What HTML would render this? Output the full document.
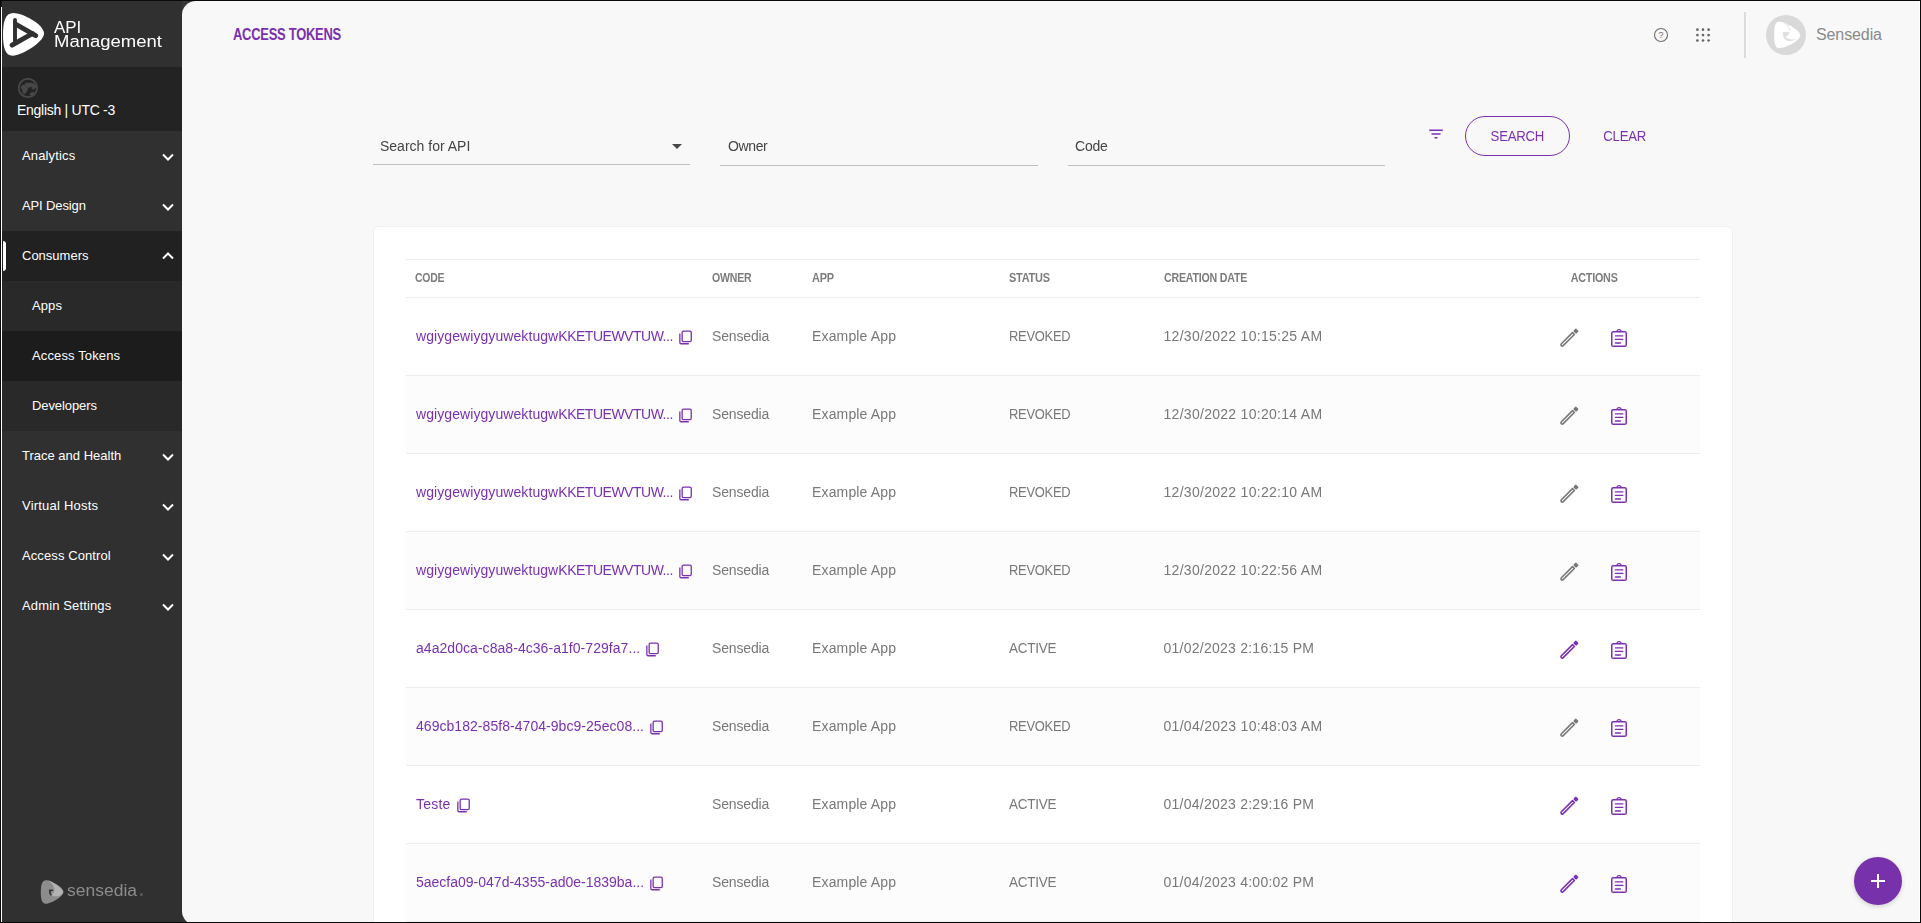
<!DOCTYPE html>
<html lang="en">
<head>
<meta charset="utf-8">
<title>Access Tokens - API Management</title>
<style>
*{box-sizing:border-box;margin:0;padding:0}
html,body{width:1921px;height:923px;overflow:hidden;background:#0a0a0a}
body{position:relative;font-family:"Liberation Sans",Arial,sans-serif;font-size:14px;color:#444;-webkit-font-smoothing:antialiased}
ul{list-style:none}
button{font:inherit;background:none;border:0;cursor:pointer}
svg{display:block}
.app{position:absolute;left:1px;top:1px;width:1919px;height:921px;background:#363636;overflow:hidden}
.edge{position:absolute;left:0;top:0;width:1px;height:921px;background:#fff;z-index:5}
.edge:before{content:"";position:absolute;left:0;top:0;width:1px;height:6px;background:#2d0a38}
/* ---------- sidebar ---------- */
.sidebar{position:absolute;left:1px;top:0;width:180px;height:921px;background:#303030;color:#fff}
.brand{position:relative;height:66px;background:#303030}
.brand svg{position:absolute;left:0;top:0}
.brand .t{position:absolute;left:52px;white-space:nowrap;color:#fff;line-height:16px;will-change:transform}
.brand .t1{top:19px}
.brand .t2{top:33px}
.lang{position:relative;height:64px;background:#232323}
.lang svg{position:absolute;left:16px;top:11px}
.lang span{position:absolute;left:15px;top:33px;line-height:20px;white-space:nowrap;color:#fff}
.nav li{position:relative}
.nav a{display:block;height:50px;line-height:50px;padding-left:20px;color:#fff;text-decoration:none;font-size:13px;white-space:nowrap;position:relative}
.nav a svg{position:absolute;left:160px;top:14px}
.nav .open>a{background:#212121}
.nav .open>a:before{content:"";position:absolute;left:1px;top:10px;width:3px;height:30px;background:#fff;border-radius:0 3px 3px 0}
.nav .sub a{padding-left:30px;background:#292929}
.nav .sub a.cur{background:#1c1c1c}
.foot{position:absolute;left:0;bottom:0;width:180px;height:60px}
.foot svg{position:absolute;left:38px;top:17px}
.foot span{position:absolute;left:65px;top:19px;line-height:20px;color:#8c8c8c;white-space:nowrap;will-change:transform}
.foot i{position:absolute;left:138px;top:31px;width:3px;height:3px;border-radius:50%;background:#5a5a5a}
/* ---------- main ---------- */
.main{position:absolute;left:181px;top:0;width:1738px;height:924px;background:#f8f8f8;border-radius:14px 0 0 14px;overflow:hidden}
.top{position:relative;height:68px}
.top h1{position:absolute;left:51px;top:24px;line-height:20px;font-weight:700;color:#7a30b0;white-space:nowrap}
.top .help{position:absolute;left:1471px;top:26px}
.top .grid{position:absolute;left:1512px;top:25px}
.top .sep{position:absolute;left:1562px;top:11px;width:2px;height:46px;background:#dcdcdc}
.top .avatar{position:absolute;left:1584px;top:14px;width:40px;height:40px;border-radius:50%;background:#d9d9d9}
.top .user{position:absolute;left:1634px;top:24px;line-height:20px;color:#8a8a8a;white-space:nowrap}
.filters{will-change:transform;position:absolute;left:0;top:115px;width:1738px;height:50px}
.field{position:absolute;top:0;height:49px;border-bottom:1px solid #bfbfbf}
.field label{position:absolute;left:7px;top:20px;line-height:20px;color:#444;white-space:nowrap}
.field .caret{position:absolute;right:8px;top:28px;width:0;height:0;border-left:5px solid transparent;border-right:5px solid transparent;border-top:5px solid #484848}
.filt{position:absolute;left:1245px;top:9px}
.btn{position:absolute;top:0;height:40px;line-height:38px;text-align:center;color:#7a30b0;white-space:nowrap}
.btn.out{left:1283px;width:105px;border:1px solid #7a30b0;border-radius:20px}
.btn.txt{left:1405px;width:76px;line-height:40px}
/* ---------- card/table ---------- */
.card{will-change:transform;position:absolute;left:191px;top:225px;width:1360px;height:760px;background:#fff;border:1px solid #efefef;border-radius:6px}
table{position:absolute;left:32px;top:32px;width:1294px;border-collapse:separate;border-spacing:0;table-layout:fixed}
th,td{padding:0 0 2px 9px;text-align:left;vertical-align:middle;white-space:nowrap;overflow:hidden;border-bottom:1px solid #ededed}
th{height:39px;border-top:1px solid #ededed;color:#7c7c7c;font-weight:700;font-size:12px}
td{height:78px;color:#787878;font-size:14px}
tbody tr:nth-child(even) td{background:#fcfcfc}
th.c,td.c{text-align:center;padding:0 0 2px 0}
th:nth-child(4),td:nth-child(4),th:nth-child(5),td:nth-child(5){padding-left:9.5px}
td.code{padding-left:10px}
td.code{color:#7a30b0}
td.code span,td.code svg{display:inline-block;vertical-align:middle}
td.code svg{margin-left:6px;position:relative;top:1.8px}
.acts{position:relative;height:24px;width:211px}
.acts svg{position:absolute;top:2px}
.acts .pen{left:68px;top:2.5px}
.acts .clip{left:121px;top:4px}
.main:after{content:"";position:absolute;right:0;top:0;width:1px;height:921px;background:#fff}
.fab{position:absolute;left:1672px;top:856px;width:48px;height:48px;border-radius:50%;background:#7732ab;box-shadow:0 2px 4px rgba(0,0,0,.10),0 1px 6px rgba(0,0,0,.06)}
.fab:before,.fab:after{content:"";position:absolute;background:#fff}
.fab:before{left:17px;top:23px;width:14px;height:2px}
.fab:after{left:23px;top:17px;width:2px;height:14px}
</style>
</head>
<body>
<div class="app">
<div class="edge"></div>
<aside class="sidebar">
<div class="brand"><svg width="50" height="66" viewBox="0 0 50 66"><path d="M11.5 12C20 12 42 23 42 32.6C42 41 20 54.7 10.5 54.7C3 54.7 1 46 1 34C1 21 3 12 11.5 12Z" fill="#fff"/><g fill="none" stroke="#303030" stroke-linecap="round"><path d="M13 18.9V42.4" stroke-width="3.9"/><path d="M14 23.4L33.7 34.6" stroke-width="4.9"/><path d="M10.1 44.1L30.3 32.6" stroke-width="4.9"/></g></svg><span class="t t1" style="font-size:16px;display:inline-block;transform:scaleX(1.0583);transform-origin:left center;">API</span><span class="t t2" style="font-size:16px;display:inline-block;transform:scaleX(1.1564);transform-origin:left center;">Management</span></div>
<div class="lang"><svg width="21" height="21" viewBox="0 0 21 21"><circle cx="9.9" cy="10" r="9.2" fill="none" stroke="#484848" stroke-width="1.8"/><g fill="#484848" stroke="#484848" stroke-width="0.7" stroke-linejoin="round"><path d="M3 8.7L4.500 7.200L7.100 7L9 8.700L9.800 10.900L8.700 13.200L7.100 15.500L5.600 16.200L4.900 14L4.500 11.700L3.200 10.200Z"/><path d="M7.200 5.300L9.800 5.100L13.200 5.100L16.200 6L18 7.900L17.400 9.800L15.500 11.300L14 10.600L14.700 9L12.400 8.700L10.900 9.800L9.400 8.700L7.900 7.200Z"/><path d="M12.100 15.500L13.600 14.400L15.500 14.200L16.200 15.500L15.500 17L13.600 17.700L12.300 17Z"/></g></svg><span style="font-size:14px;letter-spacing:-0.277px;">English | UTC -3</span></div>
<nav class="nav"><ul>
<li><a><span style="font-size:13px;letter-spacing:0.146px;">Analytics</span><svg width="12" height="8" viewBox="0 0 12 8" style="top:22px"><polyline points="1,1.5 6,6.5 11,1.5" fill="none" stroke="#fff" stroke-width="2"/></svg></a></li>
<li><a><span style="font-size:13px;letter-spacing:-0.127px;">API Design</span><svg width="12" height="8" viewBox="0 0 12 8" style="top:22px"><polyline points="1,1.5 6,6.5 11,1.5" fill="none" stroke="#fff" stroke-width="2"/></svg></a></li>
<li class="open"><a><span style="font-size:13px;">Consumers</span><svg width="12" height="8" viewBox="0 0 12 8" style="top:21px"><polyline points="1,6.5 6,1.5 11,6.5" fill="none" stroke="#fff" stroke-width="2"/></svg></a>
<ul class="sub">
<li><a><span style="font-size:13px;letter-spacing:0.086px;">Apps</span></a></li>
<li><a class="cur"><span style="font-size:13px;letter-spacing:0.136px;">Access Tokens</span></a></li>
<li><a><span style="font-size:13px;letter-spacing:-0.085px;">Developers</span></a></li>
</ul></li>
<li><a><span style="font-size:13px;">Trace and Health</span><svg width="12" height="8" viewBox="0 0 12 8" style="top:22px"><polyline points="1,1.5 6,6.5 11,1.5" fill="none" stroke="#fff" stroke-width="2"/></svg></a></li>
<li><a><span style="font-size:13px;letter-spacing:0.211px;">Virtual Hosts</span><svg width="12" height="8" viewBox="0 0 12 8" style="top:22px"><polyline points="1,1.5 6,6.5 11,1.5" fill="none" stroke="#fff" stroke-width="2"/></svg></a></li>
<li><a><span style="font-size:13px;letter-spacing:0.098px;">Access Control</span><svg width="12" height="8" viewBox="0 0 12 8" style="top:22px"><polyline points="1,1.5 6,6.5 11,1.5" fill="none" stroke="#fff" stroke-width="2"/></svg></a></li>
<li><a><span style="font-size:13px;letter-spacing:0.136px;">Admin Settings</span><svg width="12" height="8" viewBox="0 0 12 8" style="top:22px"><polyline points="1,1.5 6,6.5 11,1.5" fill="none" stroke="#fff" stroke-width="2"/></svg></a></li>
</ul></nav>
<div class="foot"><svg width="24" height="26" viewBox="0 0 24 26"><path d="M6 1.200C11 1.200 23.400 8 23.400 13C23.400 17.500 11 24.800 5.600 24.800C1.800 24.800 .8 20 .8 13.600C.8 6.400 1.800 1.200 6 1.200Z" fill="#8c8c8c"/><path d="M7.900 1.150C10.500 3 14.500 7 14.400 10.600C14.300 13 13 15 11.600 15.400L11 16.400C14 17.600 18 17.500 20 16.800C21.500 15.600 23.300 14 23.300 12.700C22 9.500 13 2.500 7.900 1.150Z" fill="#b2b2b2"/><path d="M9.150 10.500L13.300 10.760L13 12L11 12.100L10.600 14.300L12.300 16.200L10.300 16.600L9.100 14Z" fill="#303030"/></svg><span style="font-size:16px;display:inline-block;transform:scaleX(1.0929);transform-origin:left center;">sensedia</span><i></i></div>
</aside>
<main class="main">
<header class="top"><h1 style="font-size:16px;letter-spacing:-0.320px;display:inline-block;transform:scaleX(0.8094);transform-origin:left center;">ACCESS TOKENS</h1><svg class="help" width="16" height="16" viewBox="0 0 16 16"><circle cx="8" cy="8" r="6.5" fill="none" stroke="#6e6e6e" stroke-width="1.1"/><text x="8" y="11.400" text-anchor="middle" font-family="Liberation Sans, sans-serif" font-size="9.500" fill="#6e6e6e">?</text></svg><svg class="grid" width="18" height="18" viewBox="0 0 18 18" fill="#666"><circle cx="3.4" cy="3.7" r="1.35"/><circle cx="3.4" cy="9.1" r="1.35"/><circle cx="3.4" cy="14.5" r="1.35"/><circle cx="9.0" cy="3.7" r="1.35"/><circle cx="9.0" cy="9.1" r="1.35"/><circle cx="9.0" cy="14.5" r="1.35"/><circle cx="14.6" cy="3.7" r="1.35"/><circle cx="14.6" cy="9.1" r="1.35"/><circle cx="14.6" cy="14.5" r="1.35"/></svg><span class="sep"></span><span class="avatar"><svg width="40" height="40" viewBox="0 0 40 40"><path d="M12.800 6.700C19 6.700 34.200 15 34.200 20.500C34.200 25.500 19.500 33.200 13.200 33.200C9 33.200 8.200 27.500 8.200 20.500C8.200 12.500 8.800 6.700 12.800 6.700Z" fill="#fff"/><path d="M18.400 8.200C21.500 9.500 24.200 13 23.600 16.500" fill="none" stroke="#e9e9e9" stroke-width="1.3"/><path d="M17 17L23.600 17.300C23 19.500 21.500 21 19.500 21.800C21 24 25 25.200 30.300 24.300C26 26.600 21 26.400 18.600 24C17.300 22.400 16.900 20 17 17Z" fill="#dedede"/></svg></span><span class="user" style="font-size:16px;letter-spacing:-0.103px;">Sensedia</span></header>
<section class="filters"><div class="field" style="left:191px;width:317px"><label style="font-size:14px;">Search for API</label><span class="caret"></span></div><div class="field" style="left:538px;width:318px;height:50px"><label style="font-size:14px;letter-spacing:-0.384px;left:8px;">Owner</label></div><div class="field" style="left:886px;width:317px;height:50px"><label style="font-size:14px;letter-spacing:-0.223px;">Code</label></div><svg class="filt" width="18" height="18" viewBox="0 0 24 24" fill="#7a30b0"><path d="M10 18h4v-2h-4v2zM3 6v2h18V6H3zm3 7h12v-2H6v2z"/></svg><button class="btn out"><span style="font-size:14px;letter-spacing:-0.280px;display:inline-block;transform:scaleX(0.9428);transform-origin:center center;">SEARCH</span></button><button class="btn txt"><span style="font-size:14px;letter-spacing:-0.280px;display:inline-block;transform:scaleX(0.9393);transform-origin:center center;">CLEAR</span></button></section>
<section class="card"><table><colgroup><col style="width:297px"><col style="width:100px"><col style="width:196px"><col style="width:155px"><col style="width:335px"><col style="width:211px"></colgroup>
<thead><tr><th><span style="font-size:12px;letter-spacing:-0.240px;display:inline-block;transform:scaleX(0.8689);transform-origin:left center;">CODE</span></th><th><span style="font-size:12px;letter-spacing:-0.240px;display:inline-block;transform:scaleX(0.8792);transform-origin:left center;">OWNER</span></th><th><span style="font-size:12px;letter-spacing:-0.240px;display:inline-block;transform:scaleX(0.9088);transform-origin:left center;">APP</span></th><th><span style="font-size:12px;letter-spacing:-0.240px;display:inline-block;transform:scaleX(0.9107);transform-origin:left center;">STATUS</span></th><th><span style="font-size:12px;letter-spacing:-0.240px;display:inline-block;transform:scaleX(0.8871);transform-origin:left center;">CREATION DATE</span></th><th class="c"><span style="font-size:12px;letter-spacing:-0.240px;display:inline-block;transform:scaleX(0.8980);transform-origin:center center;">ACTIONS</span></th></tr></thead><tbody>
<tr><td class="code"><span style="font-size:14px"><span style="letter-spacing:0.077px">wgiygewiygyuwektugw</span><span style="letter-spacing:-0.49px">KKETUEWVTUW...</span></span><svg width="14" height="15" viewBox="0 0 14 15" fill="none" stroke="#7a30b0" stroke-width="1.3"><rect x="3.15" y="1.15" width="9.1" height="10.5" rx="1.4"/><path d="M0.85 3.5V12.45A1.3 1.3 0 0 0 2.15 13.75H9.8"/></svg></td><td><span style="font-size:14px;letter-spacing:-0.156px;">Sensedia</span></td><td><span style="font-size:14px;letter-spacing:0.150px;">Example App</span></td><td><span style="font-size:14px;letter-spacing:-0.280px;display:inline-block;transform:scaleX(0.9238);transform-origin:left center;">REVOKED</span></td><td><span style="font-size:14px;letter-spacing:0.287px;">12/30/2022 10:15:25 AM</span></td><td class="c"><div class="acts"><svg class="pen" width="24" height="24" viewBox="0 0 24 24"><g transform="translate(12 12) rotate(-45) translate(-11.7 0)"><path d="M18 -1.3H2.2A1.3 1.3 0 0 0 2.2 1.3H18Z" fill="none" stroke="#777" stroke-width="1.6" stroke-linejoin="round"/><rect x="19.6" y="-2.1" width="3.8" height="4.2" rx="1" fill="#777"/></g></svg><svg class="clip" width="18" height="20" viewBox="0 0 18 20" fill="none" stroke="#7a30b0"><rect x="1.75" y="3.75" width="14.5" height="14.5" rx="1.6" stroke-width="1.5"/><path d="M7 3.6a2 2 0 0 1 4 0" stroke-width="1.3"/><path d="M5.4 7.9h7.4M5.4 11.4h7.4M5.4 15h5" stroke-width="1.3" stroke-linecap="round"/></svg></div></td></tr>
<tr><td class="code"><span style="font-size:14px"><span style="letter-spacing:0.077px">wgiygewiygyuwektugw</span><span style="letter-spacing:-0.49px">KKETUEWVTUW...</span></span><svg width="14" height="15" viewBox="0 0 14 15" fill="none" stroke="#7a30b0" stroke-width="1.3"><rect x="3.15" y="1.15" width="9.1" height="10.5" rx="1.4"/><path d="M0.85 3.5V12.45A1.3 1.3 0 0 0 2.15 13.75H9.8"/></svg></td><td><span style="font-size:14px;letter-spacing:-0.156px;">Sensedia</span></td><td><span style="font-size:14px;letter-spacing:0.150px;">Example App</span></td><td><span style="font-size:14px;letter-spacing:-0.280px;display:inline-block;transform:scaleX(0.9238);transform-origin:left center;">REVOKED</span></td><td><span style="font-size:14px;letter-spacing:0.287px;">12/30/2022 10:20:14 AM</span></td><td class="c"><div class="acts"><svg class="pen" width="24" height="24" viewBox="0 0 24 24"><g transform="translate(12 12) rotate(-45) translate(-11.7 0)"><path d="M18 -1.3H2.2A1.3 1.3 0 0 0 2.2 1.3H18Z" fill="none" stroke="#777" stroke-width="1.6" stroke-linejoin="round"/><rect x="19.6" y="-2.1" width="3.8" height="4.2" rx="1" fill="#777"/></g></svg><svg class="clip" width="18" height="20" viewBox="0 0 18 20" fill="none" stroke="#7a30b0"><rect x="1.75" y="3.75" width="14.5" height="14.5" rx="1.6" stroke-width="1.5"/><path d="M7 3.6a2 2 0 0 1 4 0" stroke-width="1.3"/><path d="M5.4 7.9h7.4M5.4 11.4h7.4M5.4 15h5" stroke-width="1.3" stroke-linecap="round"/></svg></div></td></tr>
<tr><td class="code"><span style="font-size:14px"><span style="letter-spacing:0.077px">wgiygewiygyuwektugw</span><span style="letter-spacing:-0.49px">KKETUEWVTUW...</span></span><svg width="14" height="15" viewBox="0 0 14 15" fill="none" stroke="#7a30b0" stroke-width="1.3"><rect x="3.15" y="1.15" width="9.1" height="10.5" rx="1.4"/><path d="M0.85 3.5V12.45A1.3 1.3 0 0 0 2.15 13.75H9.8"/></svg></td><td><span style="font-size:14px;letter-spacing:-0.156px;">Sensedia</span></td><td><span style="font-size:14px;letter-spacing:0.150px;">Example App</span></td><td><span style="font-size:14px;letter-spacing:-0.280px;display:inline-block;transform:scaleX(0.9238);transform-origin:left center;">REVOKED</span></td><td><span style="font-size:14px;letter-spacing:0.287px;">12/30/2022 10:22:10 AM</span></td><td class="c"><div class="acts"><svg class="pen" width="24" height="24" viewBox="0 0 24 24"><g transform="translate(12 12) rotate(-45) translate(-11.7 0)"><path d="M18 -1.3H2.2A1.3 1.3 0 0 0 2.2 1.3H18Z" fill="none" stroke="#777" stroke-width="1.6" stroke-linejoin="round"/><rect x="19.6" y="-2.1" width="3.8" height="4.2" rx="1" fill="#777"/></g></svg><svg class="clip" width="18" height="20" viewBox="0 0 18 20" fill="none" stroke="#7a30b0"><rect x="1.75" y="3.75" width="14.5" height="14.5" rx="1.6" stroke-width="1.5"/><path d="M7 3.6a2 2 0 0 1 4 0" stroke-width="1.3"/><path d="M5.4 7.9h7.4M5.4 11.4h7.4M5.4 15h5" stroke-width="1.3" stroke-linecap="round"/></svg></div></td></tr>
<tr><td class="code"><span style="font-size:14px"><span style="letter-spacing:0.077px">wgiygewiygyuwektugw</span><span style="letter-spacing:-0.49px">KKETUEWVTUW...</span></span><svg width="14" height="15" viewBox="0 0 14 15" fill="none" stroke="#7a30b0" stroke-width="1.3"><rect x="3.15" y="1.15" width="9.1" height="10.5" rx="1.4"/><path d="M0.85 3.5V12.45A1.3 1.3 0 0 0 2.15 13.75H9.8"/></svg></td><td><span style="font-size:14px;letter-spacing:-0.156px;">Sensedia</span></td><td><span style="font-size:14px;letter-spacing:0.150px;">Example App</span></td><td><span style="font-size:14px;letter-spacing:-0.280px;display:inline-block;transform:scaleX(0.9238);transform-origin:left center;">REVOKED</span></td><td><span style="font-size:14px;letter-spacing:0.287px;">12/30/2022 10:22:56 AM</span></td><td class="c"><div class="acts"><svg class="pen" width="24" height="24" viewBox="0 0 24 24"><g transform="translate(12 12) rotate(-45) translate(-11.7 0)"><path d="M18 -1.3H2.2A1.3 1.3 0 0 0 2.2 1.3H18Z" fill="none" stroke="#777" stroke-width="1.6" stroke-linejoin="round"/><rect x="19.6" y="-2.1" width="3.8" height="4.2" rx="1" fill="#777"/></g></svg><svg class="clip" width="18" height="20" viewBox="0 0 18 20" fill="none" stroke="#7a30b0"><rect x="1.75" y="3.75" width="14.5" height="14.5" rx="1.6" stroke-width="1.5"/><path d="M7 3.6a2 2 0 0 1 4 0" stroke-width="1.3"/><path d="M5.4 7.9h7.4M5.4 11.4h7.4M5.4 15h5" stroke-width="1.3" stroke-linecap="round"/></svg></div></td></tr>
<tr><td class="code"><span style="font-size:14px;letter-spacing:0.050px;">a4a2d0ca-c8a8-4c36-a1f0-729fa7...</span><svg width="14" height="15" viewBox="0 0 14 15" fill="none" stroke="#7a30b0" stroke-width="1.3"><rect x="3.15" y="1.15" width="9.1" height="10.5" rx="1.4"/><path d="M0.85 3.5V12.45A1.3 1.3 0 0 0 2.15 13.75H9.8"/></svg></td><td><span style="font-size:14px;letter-spacing:-0.156px;">Sensedia</span></td><td><span style="font-size:14px;letter-spacing:0.150px;">Example App</span></td><td><span style="font-size:14px;letter-spacing:-0.280px;display:inline-block;transform:scaleX(0.9659);transform-origin:left center;">ACTIVE</span></td><td><span style="font-size:14px;letter-spacing:0.247px;">01/02/2023 2:16:15 PM</span></td><td class="c"><div class="acts"><svg class="pen" width="24" height="24" viewBox="0 0 24 24"><g transform="translate(12 12) rotate(-45) translate(-11.7 0)"><path d="M18 -1.3H2.2A1.3 1.3 0 0 0 2.2 1.3H18Z" fill="none" stroke="#7a30b0" stroke-width="1.6" stroke-linejoin="round"/><rect x="19.6" y="-2.1" width="3.8" height="4.2" rx="1" fill="#7a30b0"/></g></svg><svg class="clip" width="18" height="20" viewBox="0 0 18 20" fill="none" stroke="#7a30b0"><rect x="1.75" y="3.75" width="14.5" height="14.5" rx="1.6" stroke-width="1.5"/><path d="M7 3.6a2 2 0 0 1 4 0" stroke-width="1.3"/><path d="M5.4 7.9h7.4M5.4 11.4h7.4M5.4 15h5" stroke-width="1.3" stroke-linecap="round"/></svg></div></td></tr>
<tr><td class="code"><span style="font-size:14px;letter-spacing:0.046px;">469cb182-85f8-4704-9bc9-25ec08...</span><svg width="14" height="15" viewBox="0 0 14 15" fill="none" stroke="#7a30b0" stroke-width="1.3"><rect x="3.15" y="1.15" width="9.1" height="10.5" rx="1.4"/><path d="M0.85 3.5V12.45A1.3 1.3 0 0 0 2.15 13.75H9.8"/></svg></td><td><span style="font-size:14px;letter-spacing:-0.156px;">Sensedia</span></td><td><span style="font-size:14px;letter-spacing:0.150px;">Example App</span></td><td><span style="font-size:14px;letter-spacing:-0.280px;display:inline-block;transform:scaleX(0.9238);transform-origin:left center;">REVOKED</span></td><td><span style="font-size:14px;letter-spacing:0.287px;">01/04/2023 10:48:03 AM</span></td><td class="c"><div class="acts"><svg class="pen" width="24" height="24" viewBox="0 0 24 24"><g transform="translate(12 12) rotate(-45) translate(-11.7 0)"><path d="M18 -1.3H2.2A1.3 1.3 0 0 0 2.2 1.3H18Z" fill="none" stroke="#777" stroke-width="1.6" stroke-linejoin="round"/><rect x="19.6" y="-2.1" width="3.8" height="4.2" rx="1" fill="#777"/></g></svg><svg class="clip" width="18" height="20" viewBox="0 0 18 20" fill="none" stroke="#7a30b0"><rect x="1.75" y="3.75" width="14.5" height="14.5" rx="1.6" stroke-width="1.5"/><path d="M7 3.6a2 2 0 0 1 4 0" stroke-width="1.3"/><path d="M5.4 7.9h7.4M5.4 11.4h7.4M5.4 15h5" stroke-width="1.3" stroke-linecap="round"/></svg></div></td></tr>
<tr><td class="code"><span style="font-size:14px;letter-spacing:0.208px;">Teste</span><svg width="14" height="15" viewBox="0 0 14 15" fill="none" stroke="#7a30b0" stroke-width="1.3"><rect x="3.15" y="1.15" width="9.1" height="10.5" rx="1.4"/><path d="M0.85 3.5V12.45A1.3 1.3 0 0 0 2.15 13.75H9.8"/></svg></td><td><span style="font-size:14px;letter-spacing:-0.156px;">Sensedia</span></td><td><span style="font-size:14px;letter-spacing:0.150px;">Example App</span></td><td><span style="font-size:14px;letter-spacing:-0.280px;display:inline-block;transform:scaleX(0.9659);transform-origin:left center;">ACTIVE</span></td><td><span style="font-size:14px;letter-spacing:0.247px;">01/04/2023 2:29:16 PM</span></td><td class="c"><div class="acts"><svg class="pen" width="24" height="24" viewBox="0 0 24 24"><g transform="translate(12 12) rotate(-45) translate(-11.7 0)"><path d="M18 -1.3H2.2A1.3 1.3 0 0 0 2.2 1.3H18Z" fill="none" stroke="#7a30b0" stroke-width="1.6" stroke-linejoin="round"/><rect x="19.6" y="-2.1" width="3.8" height="4.2" rx="1" fill="#7a30b0"/></g></svg><svg class="clip" width="18" height="20" viewBox="0 0 18 20" fill="none" stroke="#7a30b0"><rect x="1.75" y="3.75" width="14.5" height="14.5" rx="1.6" stroke-width="1.5"/><path d="M7 3.6a2 2 0 0 1 4 0" stroke-width="1.3"/><path d="M5.4 7.9h7.4M5.4 11.4h7.4M5.4 15h5" stroke-width="1.3" stroke-linecap="round"/></svg></div></td></tr>
<tr><td class="code"><span style="font-size:14px;">5aecfa09-047d-4355-ad0e-1839ba...</span><svg width="14" height="15" viewBox="0 0 14 15" fill="none" stroke="#7a30b0" stroke-width="1.3"><rect x="3.15" y="1.15" width="9.1" height="10.5" rx="1.4"/><path d="M0.85 3.5V12.45A1.3 1.3 0 0 0 2.15 13.75H9.8"/></svg></td><td><span style="font-size:14px;letter-spacing:-0.156px;">Sensedia</span></td><td><span style="font-size:14px;letter-spacing:0.150px;">Example App</span></td><td><span style="font-size:14px;letter-spacing:-0.280px;display:inline-block;transform:scaleX(0.9659);transform-origin:left center;">ACTIVE</span></td><td><span style="font-size:14px;letter-spacing:0.247px;">01/04/2023 4:00:02 PM</span></td><td class="c"><div class="acts"><svg class="pen" width="24" height="24" viewBox="0 0 24 24"><g transform="translate(12 12) rotate(-45) translate(-11.7 0)"><path d="M18 -1.3H2.2A1.3 1.3 0 0 0 2.2 1.3H18Z" fill="none" stroke="#7a30b0" stroke-width="1.6" stroke-linejoin="round"/><rect x="19.6" y="-2.1" width="3.8" height="4.2" rx="1" fill="#7a30b0"/></g></svg><svg class="clip" width="18" height="20" viewBox="0 0 18 20" fill="none" stroke="#7a30b0"><rect x="1.75" y="3.75" width="14.5" height="14.5" rx="1.6" stroke-width="1.5"/><path d="M7 3.6a2 2 0 0 1 4 0" stroke-width="1.3"/><path d="M5.4 7.9h7.4M5.4 11.4h7.4M5.4 15h5" stroke-width="1.3" stroke-linecap="round"/></svg></div></td></tr>
</tbody></table></section>
<button class="fab" aria-label="Add"></button>
</main>
</div>
</body>
</html>
